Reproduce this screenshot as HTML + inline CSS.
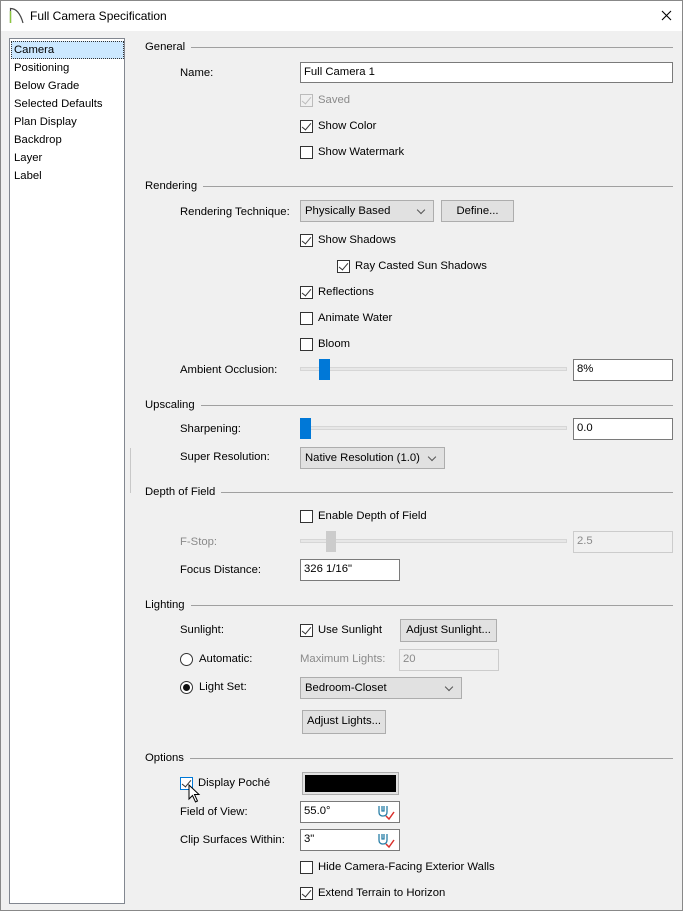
<!DOCTYPE html>
<html><head><meta charset="utf-8"><style>
*{box-sizing:border-box;margin:0;padding:0}
body{width:683px;height:911px;background:#f0f0f0;font-family:"Liberation Sans",sans-serif;font-size:11.3px;color:#000;position:relative;overflow:hidden}
.a{position:absolute;white-space:nowrap;line-height:16px}
.g{color:#8a8a8a}
.hd{position:absolute;left:145px;height:16px;line-height:16px;right:10px}
.hd span{background:#f0f0f0;padding-right:6px;position:relative;z-index:1}
.hd:after{content:"";position:absolute;left:0;right:0;top:8px;border-top:1px solid #a0a0a0}
.in{position:absolute;background:#fff;border:1px solid #7a7a7a;padding-left:3px;line-height:19px}
.in.d{background:#f0f0f0;border-color:#ccc;color:#8a8a8a}
.cb{position:absolute;width:13px;height:13px;border:1px solid #333;background:#fff}
.cb.k:after{content:"";position:absolute;left:3px;top:0px;width:4px;height:8px;border:solid #333;border-width:0 1.3px 1.3px 0;transform:rotate(40deg)}
.cb.dis{border-color:#bbb;background:#f0f0f0}.cb.dis:after{border-color:#bbb}
.sel{position:absolute;background:#e1e1e1;border:1px solid #adadad;padding-left:4px;line-height:20px}
.sel:after{content:"";position:absolute;right:9px;top:6px;width:5px;height:5px;border:solid #555;border-width:0 1px 1px 0;transform:rotate(45deg)}
.btn{position:absolute;background:#e1e1e1;border:1px solid #adadad;text-align:center;line-height:20px}
.trk{position:absolute;height:4px;background:#e7e7e7;border:1px solid #d6d6d6}
.th{position:absolute;width:11px;height:21px;background:#0078d7}
.rd{position:absolute;width:13px;height:13px;border:1px solid #333;border-radius:50%;background:#fff}
</style></head><body>
<div style="position:absolute;left:0;top:0;width:683px;height:911px;border:1px solid #888;z-index:5;pointer-events:none"></div>
<div style="position:absolute;left:0;top:0;width:683px;height:31px;background:#fff"></div>
<svg style="position:absolute;left:9px;top:6px" width="16" height="18"><path d="M1.5 17V2.5 Q10 2.5 14 17" fill="none" stroke="#444" stroke-width="1.2"/><path d="M1.5 17V5" stroke="#8cc63f" stroke-width="1.4"/></svg>
<div class="a" style="left:30px;top:8px;font-size:12px">Full Camera Specification</div>
<svg style="position:absolute;left:661px;top:10px" width="11" height="11"><path d="M1 1L10 10M10 1L1 10" stroke="#000" stroke-width="1.1"/></svg>

<div style="position:absolute;left:9px;top:38px;width:116px;height:866px;background:#fff;border:1px solid #828790"></div>
<div style="position:absolute;left:11px;top:41px;width:113px;height:18px;background:#cce8ff;border:1px dotted #333"></div>
<div class="a" style="left:14px;top:42px">Camera</div>
<div class="a" style="left:14px;top:60px">Positioning</div>
<div class="a" style="left:14px;top:78px">Below Grade</div>
<div class="a" style="left:14px;top:96px">Selected Defaults</div>
<div class="a" style="left:14px;top:114px">Plan Display</div>
<div class="a" style="left:14px;top:132px">Backdrop</div>
<div class="a" style="left:14px;top:150px">Layer</div>
<div class="a" style="left:14px;top:168px">Label</div>
<div style="position:absolute;left:130px;top:448px;width:1px;height:45px;background:#c8c8c8"></div>

<div class="hd" style="top:39px"><span>General</span></div>
<div class="a" style="left:180px;top:65px">Name:</div>
<div class="in" style="left:300px;top:62px;width:373px;height:21px">Full Camera 1</div>
<div class="cb k dis" style="left:300px;top:94px"></div><div class="a g" style="left:318px;top:92px">Saved</div>
<div class="cb k" style="left:300px;top:120px"></div><div class="a" style="left:318px;top:118px">Show Color</div>
<div class="cb" style="left:300px;top:146px"></div><div class="a" style="left:318px;top:144px">Show Watermark</div>

<div class="hd" style="top:178px"><span>Rendering</span></div>
<div class="a" style="left:180px;top:204px">Rendering Technique:</div>
<div class="sel" style="left:300px;top:200px;width:134px;height:22px">Physically Based</div>
<div class="btn" style="left:441px;top:200px;width:73px;height:22px">Define...</div>
<div class="cb k" style="left:300px;top:234px"></div><div class="a" style="left:318px;top:232px">Show Shadows</div>
<div class="cb k" style="left:337px;top:260px"></div><div class="a" style="left:355px;top:258px">Ray Casted Sun Shadows</div>
<div class="cb k" style="left:300px;top:286px"></div><div class="a" style="left:318px;top:284px">Reflections</div>
<div class="cb" style="left:300px;top:312px"></div><div class="a" style="left:318px;top:310px">Animate Water</div>
<div class="cb" style="left:300px;top:338px"></div><div class="a" style="left:318px;top:336px">Bloom</div>
<div class="a" style="left:180px;top:362px">Ambient Occlusion:</div>
<div class="trk" style="left:300px;top:367px;width:267px"></div>
<div class="th" style="left:319px;top:359px"></div>
<div class="in" style="left:573px;top:359px;width:100px;height:22px">8%</div>

<div class="hd" style="top:397px"><span>Upscaling</span></div>
<div class="a" style="left:180px;top:421px">Sharpening:</div>
<div class="trk" style="left:300px;top:426px;width:267px"></div>
<div class="th" style="left:300px;top:418px"></div>
<div class="in" style="left:573px;top:418px;width:100px;height:22px">0.0</div>
<div class="a" style="left:180px;top:449px">Super Resolution:</div>
<div class="sel" style="left:300px;top:447px;width:145px;height:22px">Native Resolution (1.0)</div>

<div class="hd" style="top:484px"><span>Depth of Field</span></div>
<div class="cb" style="left:300px;top:510px"></div><div class="a" style="left:318px;top:508px">Enable Depth of Field</div>
<div class="a g" style="left:180px;top:534px">F-Stop:</div>
<div class="trk" style="left:300px;top:539px;width:267px"></div>
<div class="th" style="left:326px;top:531px;background:#ccc;width:10px"></div>
<div class="in d" style="left:573px;top:531px;width:100px;height:22px">2.5</div>
<div class="a" style="left:180px;top:562px">Focus Distance:</div>
<div class="in" style="left:300px;top:559px;width:100px;height:22px">326 1/16"</div>

<div class="hd" style="top:597px"><span>Lighting</span></div>
<div class="a" style="left:180px;top:622px">Sunlight:</div>
<div class="cb k" style="left:300px;top:624px"></div><div class="a" style="left:318px;top:622px">Use Sunlight</div>
<div class="btn" style="left:400px;top:619px;width:97px;height:23px">Adjust Sunlight...</div>
<div class="rd" style="left:180px;top:653px"></div><div class="a" style="left:199px;top:651px">Automatic:</div>
<div class="a g" style="left:300px;top:651px">Maximum Lights:</div>
<div class="in d" style="left:399px;top:649px;width:100px;height:22px">20</div>
<div class="rd" style="left:180px;top:681px"></div><div style="position:absolute;left:183px;top:684px;width:7px;height:7px;border-radius:50%;background:#111"></div>
<div class="a" style="left:199px;top:679px">Light Set:</div>
<div class="sel" style="left:300px;top:677px;width:162px;height:22px">Bedroom-Closet</div>
<div class="btn" style="left:302px;top:710px;width:84px;height:24px">Adjust Lights...</div>

<div class="hd" style="top:750px"><span>Options</span></div>
<div class="cb k" style="left:180px;top:777px;border-color:#0078d7"></div>
<div class="a" style="left:198px;top:775px">Display Poché</div>
<svg style="position:absolute;left:188px;top:784px" width="14" height="20"><path d="M1 1V15L4.5 11.5L7.5 18L9.5 17L6.5 10.5H11Z" fill="#fff" stroke="#000" stroke-width="1"/></svg>
<div style="position:absolute;left:302px;top:772px;width:97px;height:23px;border:1px solid #adadad;background:#e1e1e1;padding:2px"><div style="width:100%;height:100%;background:#000"></div></div>
<div class="a" style="left:180px;top:804px">Field of View:</div>
<div class="in" style="left:300px;top:801px;width:100px;height:22px">55.0°</div>
<div class="a" style="left:180px;top:832px">Clip Surfaces Within:</div>
<div class="in" style="left:300px;top:829px;width:100px;height:22px">3"</div>
<svg style="position:absolute;left:376px;top:804px" width="20" height="18"><path d="M3 2V8Q3 12 7 12Q11 12 11 8V2M6 2V7H8V2" fill="none" stroke="#2a7fa8" stroke-width="1.3"/><path d="M10 12L13 15L18 8" fill="none" stroke="#d9302c" stroke-width="1.5"/></svg>
<svg style="position:absolute;left:376px;top:832px" width="20" height="18"><path d="M3 2V8Q3 12 7 12Q11 12 11 8V2M6 2V7H8V2" fill="none" stroke="#2a7fa8" stroke-width="1.3"/><path d="M10 12L13 15L18 8" fill="none" stroke="#d9302c" stroke-width="1.5"/></svg>
<div class="cb" style="left:300px;top:861px"></div><div class="a" style="left:318px;top:859px">Hide Camera-Facing Exterior Walls</div>
<div class="cb k" style="left:300px;top:887px"></div><div class="a" style="left:318px;top:885px">Extend Terrain to Horizon</div>
</body></html>
